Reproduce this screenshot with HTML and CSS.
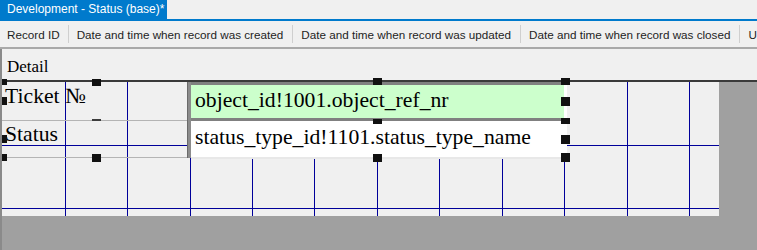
FILE: index.html
```html
<!DOCTYPE html>
<html>
<head>
<meta charset="utf-8">
<link rel="stylesheet" href="styles.css">
</head>
<body>
<div class="tabbar">
  <div class="tab">Development - Status (base)*</div>
</div>
<div class="toolbar">
  <span class="tb-item">Record ID</span>
  <span class="tb-sep"></span>
  <span class="tb-item">Date and time when record was created</span>
  <span class="tb-sep"></span>
  <span class="tb-item">Date and time when record was updated</span>
  <span class="tb-sep"></span>
  <span class="tb-item">Date and time when record was closed</span>
  <span class="tb-sep"></span>
  <span class="tb-item">Unique identifier</span>
</div>
<div class="designer">
  <div class="section-head">Detail</div>
  <div class="canvas">
    <svg class="grid" width="717" height="134" viewBox="0 0 717 134">
      <g stroke="#00009a" stroke-width="1">
        <line x1="63.5" y1="0" x2="63.5" y2="134"/>
        <line x1="125.5" y1="0" x2="125.5" y2="134"/>
        <line x1="188.5" y1="0" x2="188.5" y2="134"/>
        <line x1="250.5" y1="0" x2="250.5" y2="134"/>
        <line x1="312.5" y1="0" x2="312.5" y2="134"/>
        <line x1="375.5" y1="0" x2="375.5" y2="134"/>
        <line x1="437.5" y1="0" x2="437.5" y2="134"/>
        <line x1="500.5" y1="0" x2="500.5" y2="134"/>
        <line x1="562.5" y1="0" x2="562.5" y2="134"/>
        <line x1="625.5" y1="0" x2="625.5" y2="134"/>
        <line x1="687.5" y1="0" x2="687.5" y2="134"/>
        <line x1="0" y1="63.5" x2="717" y2="63.5"/>
        <line x1="0" y1="126.5" x2="717" y2="126.5"/>
      </g>
    </svg>
    <div class="label label-ticket">Ticket №</div>
    <div class="label label-status">Status</div>
    <div class="field-bar"></div>
    <div class="field field-green">object_id!1001.object_ref_nr</div>
    <div class="field field-white">status_type_id!1101.status_type_name</div>

    <span class="handle h-l1"></span>
    <span class="handle h-l2"></span>
    <span class="handle h-l3"></span>
    <span class="handle h-l4"></span>
    <span class="handle h-m1"></span>
    <span class="handle h-m2"></span>
    <span class="tick h-mt"></span>
    <span class="handle h-c1"></span>
    <span class="handle h-c2"></span>
    <span class="handle h-c3"></span>
    <span class="handle h-r1"></span>
    <span class="handle h-r2"></span>
    <span class="handle h-r3"></span>
    <span class="handle h-r4"></span>
    <span class="handle h-r5"></span>
  </div>
</div>
</body>
</html>
```
FILE: styles.css
```css
html, body {
  margin: 0;
  padding: 0;
  width: 757px;
  height: 250px;
  overflow: hidden;
  background: #f0f0f0;
  font-family: "Liberation Sans", Arial, sans-serif;
}

.tabbar {
  height: 19px;
  border-bottom: 2px solid #007acc;
  display: flex;
}

.tab {
  width: 160px;
  padding-left: 7px;
  background: #007acc;
  color: #ffffff;
  font-size: 12px;
  line-height: 19px;
  white-space: nowrap;
  overflow: hidden;
}

.toolbar {
  height: 26px;
  display: flex;
  align-items: center;
  white-space: nowrap;
  overflow: hidden;
  border-bottom: 2px solid #a9a9a9;
  font-size: 11.7px;
  color: #1e1e1e;
}

.tb-item {
  padding: 0 9px 0 8px;
  flex: none;
}

.tb-item:first-child {
  padding-left: 7px;
  padding-right: 8px;
}

.tb-sep {
  flex: none;
  width: 1px;
  height: 18px;
  background: #cfcfcf;
}

.designer {
  border-left: 2px solid #8a8a8a;
  height: 201px;
  background: #a0a0a0;
}

.section-head {
  box-sizing: border-box;
  height: 33px;
  background: #f0f0f0;
  border-bottom: 2px solid #3a3a3a;
  font-family: "Liberation Serif", serif;
  font-size: 17px;
  line-height: 20px;
  padding-left: 5px;
  padding-top: 8px;
}

.canvas {
  position: relative;
  width: 717px;
  height: 134px;
  background: #f0f0f0;
}

.grid {
  display: block;
}

.label {
  position: absolute;
  left: 0;
  width: 185px;
  box-sizing: border-box;
  padding-left: 3px;
  font-family: "Liberation Serif", serif;
  font-size: 21.7px;
  line-height: 24px;
  color: #000;
  border-bottom: 1px solid #b4b4b4;
}

.label-ticket {
  top: 0;
  height: 39px;
  padding-top: 2px;
}

.label-status {
  top: 39px;
  height: 37px;
  padding-top: 1px;
}

.field-bar {
  position: absolute;
  left: 185px;
  top: 0;
  width: 4px;
  height: 76px;
  background: #8c8c8c;
  border-left: 1px solid #6a6a6a;
  box-sizing: border-box;
}

.field {
  position: absolute;
  left: 189px;
  width: 376px;
  box-sizing: border-box;
  padding-left: 4px;
  border-right: 3px solid #ffffff;
  font-family: "Liberation Serif", serif;
  font-size: 21.7px;
  line-height: 24px;
  color: #000;
  white-space: nowrap;
}

.field-green {
  top: 0;
  height: 39px;
  background: #ccffcc;
  border-top: 3px solid #808080;
  border-bottom: 3px solid #808080;
  padding-top: 3px;
}

.field-white {
  top: 39px;
  height: 38px;
  background: #ffffff;
  border-bottom: 2px solid #e8e8e8;
  padding-top: 4px;
}

.handle {
  position: absolute;
  background: #111111;
}

.tick {
  position: absolute;
  background: #3c3c3c;
}

/* label column (left edge) */
.h-l1 { left: 0; top: -3px; width: 5px; height: 6px; }
.h-l2 { left: 0; top: 15px; width: 5px; height: 8px; }
.h-l3 { left: 0; top: 53px; width: 5px; height: 8px; }
.h-l4 { left: 0; top: 72px; width: 5px; height: 7px; }

/* label middle */
.h-m1 { left: 90px; top: -3px; width: 9px; height: 7px; }
.h-m2 { left: 90px; top: 72px; width: 9px; height: 8px; }
.h-mt { left: 90px; top: 37px; width: 9px; height: 2px; }

/* field middle */
.h-c1 { left: 371px; top: -4px; width: 9px; height: 7px; }
.h-c2 { left: 371px; top: 37px; width: 9px; height: 5px; }
.h-c3 { left: 371px; top: 72px; width: 9px; height: 8px; }

/* field right edge */
.h-r1 { left: 559px; top: -4px; width: 9px; height: 7px; }
.h-r2 { left: 559px; top: 15px; width: 9px; height: 9px; }
.h-r3 { left: 559px; top: 36px; width: 9px; height: 6px; }
.h-r4 { left: 559px; top: 53px; width: 9px; height: 9px; }
.h-r5 { left: 559px; top: 71px; width: 9px; height: 9px; }
```
